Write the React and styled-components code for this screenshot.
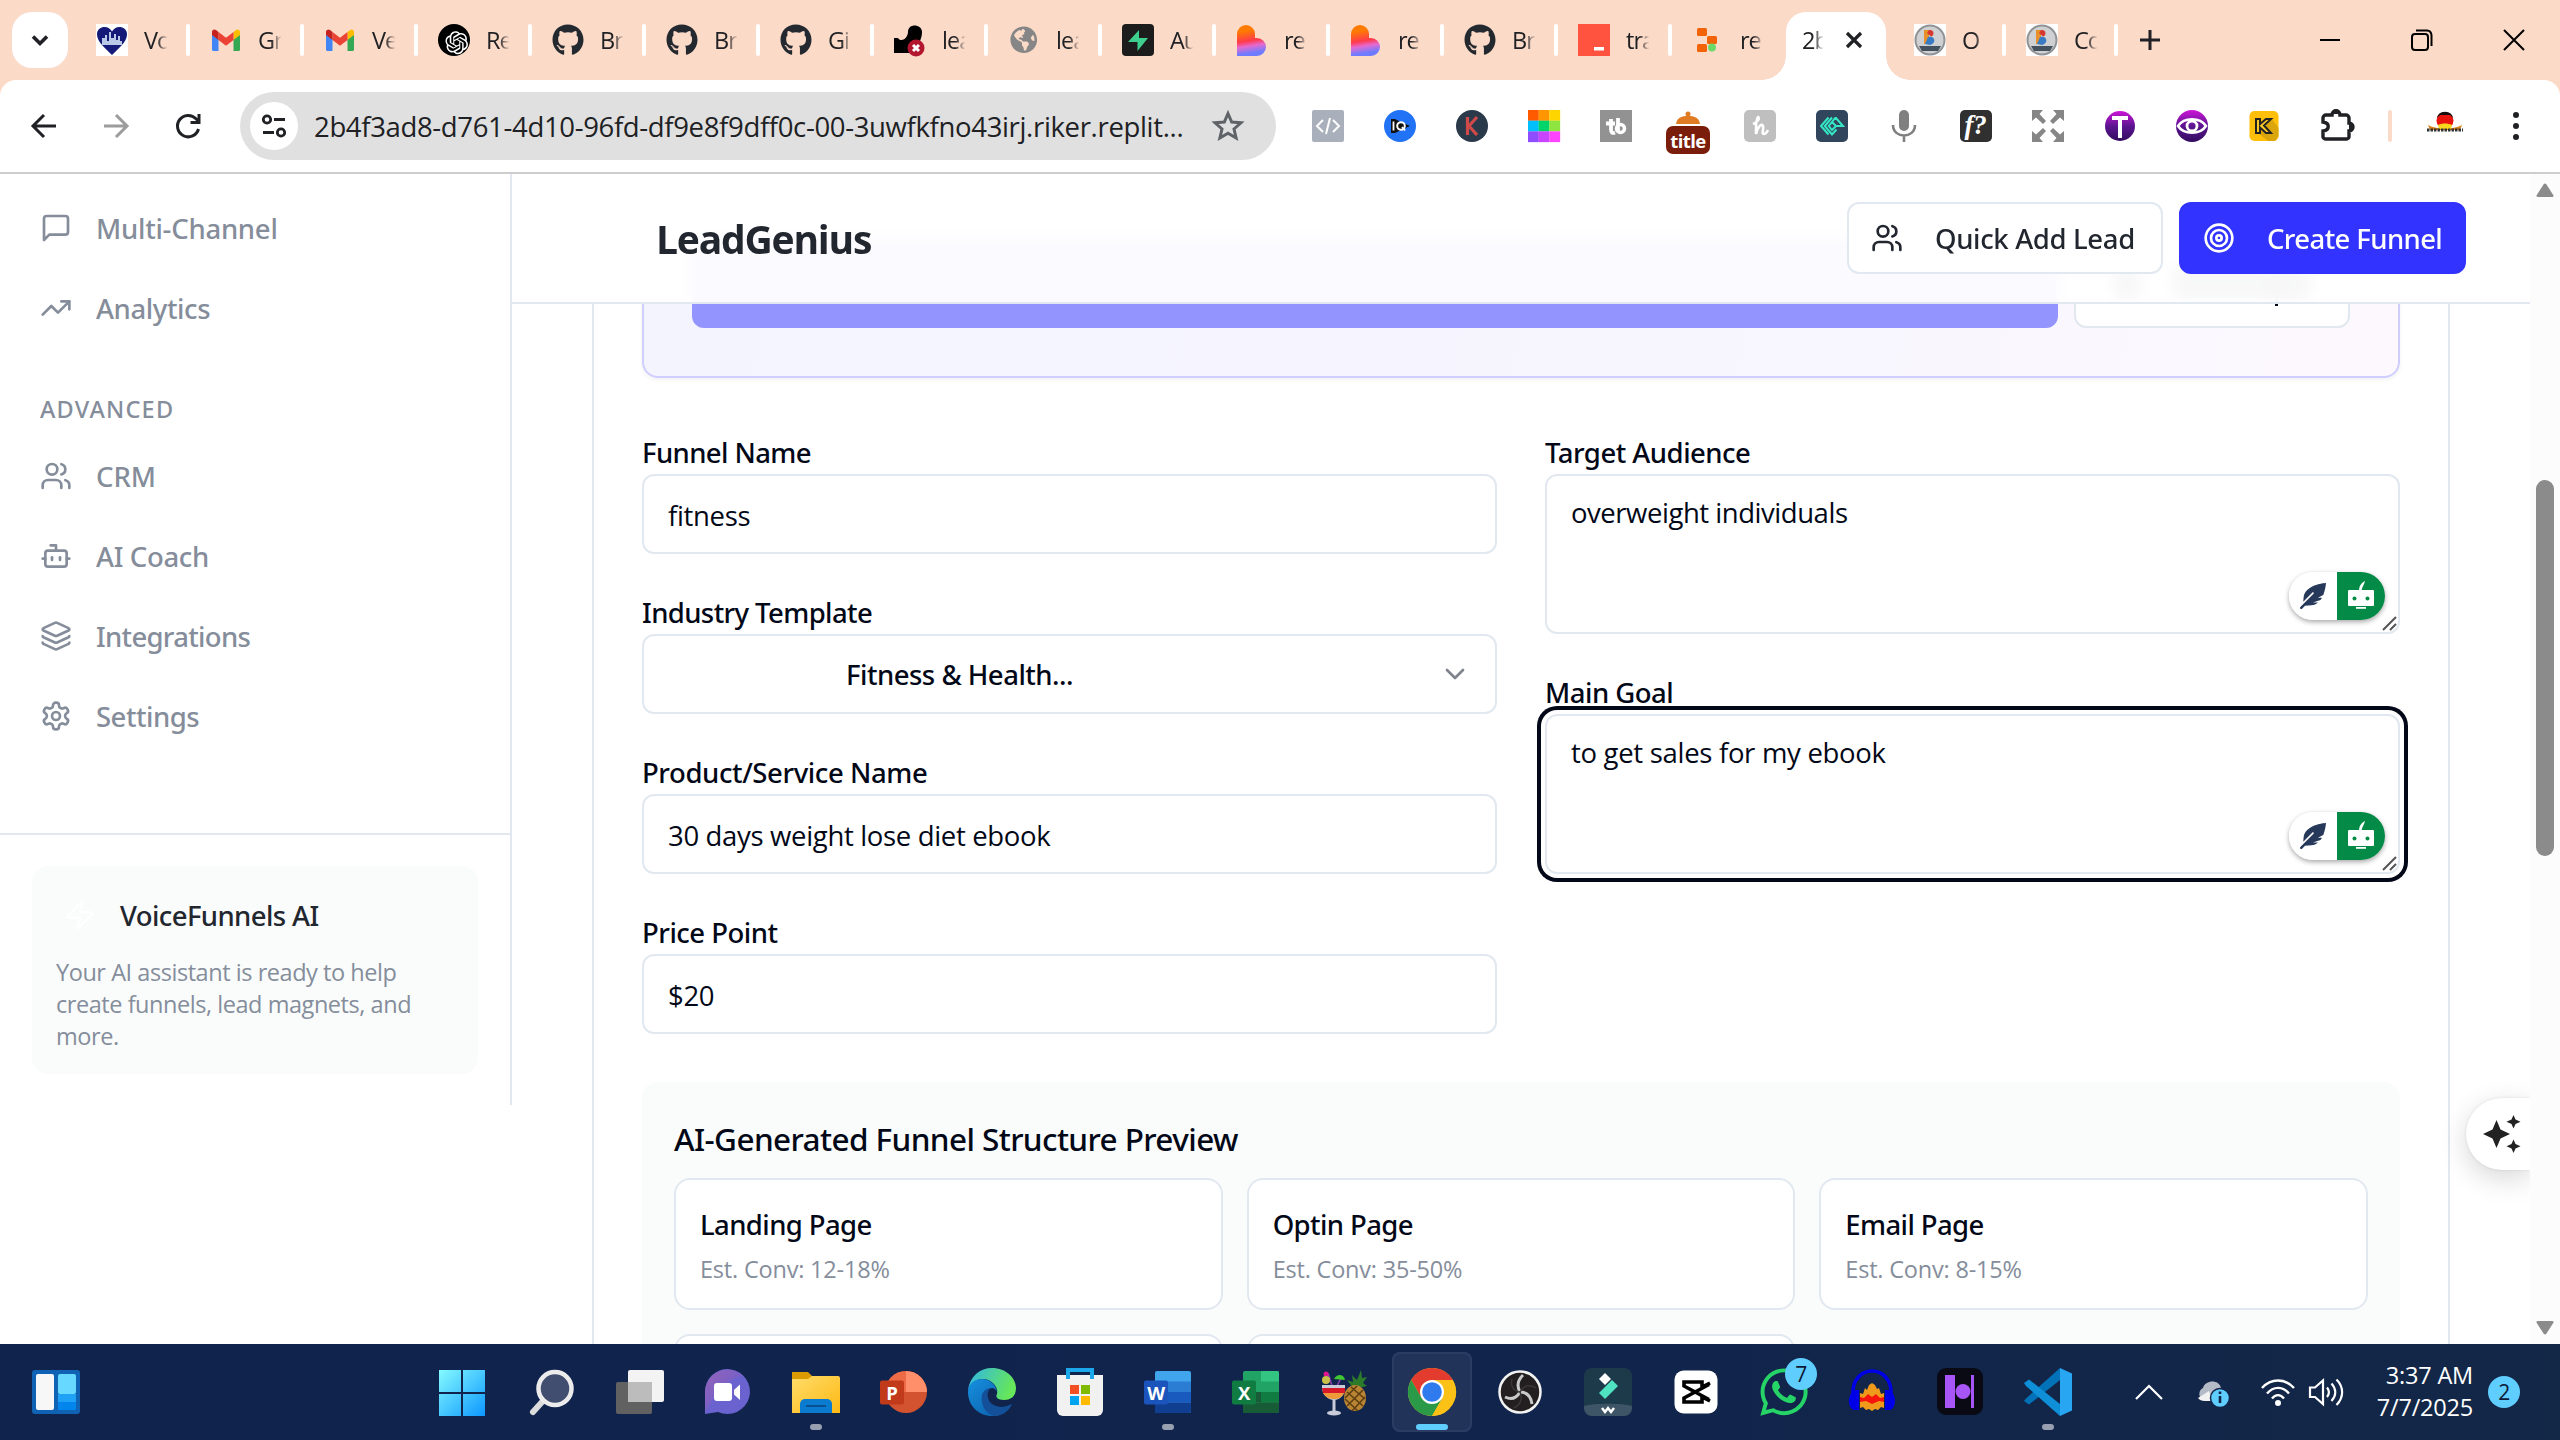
import React from 'react';
import styled, { createGlobalStyle, css } from 'styled-components';
import { Users, TrendingUp, Bot, Layers, Target, Zap, ChevronDown } from 'lucide-react';
import { FaGithub, FaWhatsapp, FaFeatherAlt, FaGlobeAmericas } from 'react-icons/fa';
import { RiOpenaiFill } from 'react-icons/ri';

const BORDER = '#e2e8f0';
const INK = '#020817';
const MUTED = '#858d9b';
const REGULAR = '"Open Sans", "Noto Sans", sans-serif';
const MEDIUM = '"Noto Sans", "Open Sans", sans-serif';

const Global = createGlobalStyle`
  *, *::before, *::after { box-sizing: border-box; }
  html, body { margin: 0; background: #fff; overflow: hidden; }
  svg { display: block; flex: none; overflow: visible; }
`;

const Screen = styled.div`
  width: 2560px;
  height: 1440px;
  display: flex;
  flex-direction: column;
  overflow: hidden;
  font-family: ${REGULAR};
  font-size: 27.5px;
  letter-spacing: -0.012em;
  color: ${INK};
`;

const medium = css`
  font-family: ${MEDIUM};
  font-weight: 500;
  letter-spacing: ${(p) => p.$track ?? -0.6}px;
`;

/* ---------- Browser tabs ---------- */

const TabStrip = styled.div`
  height: 80px;
  flex: none;
  display: flex;
  padding: 12px 0 0 12px;
  background: #fcdac8;
  color: #202124;
`;

const TabSearch = styled.div`
  width: 56px;
  height: 56px;
  margin-right: 8px;
  border-radius: 20px;
  background: #fff;
  display: grid;
  place-items: center;
`;

const Tab = styled.div`
  width: ${(p) => p.$w || 114}px;
  height: 56px;
  padding-left: 20px;
  display: flex;
  align-items: center;
  gap: 16px;
  ${(p) => p.$gap && `margin-left: ${p.$gap}px;`}
  &::after {
    content: '';
    width: 4px;
    height: 32px;
    margin-left: auto;
    border-radius: 2px;
    background: ${(p) => (p.$last ? 'transparent' : '#fff')};
  }
`;

const TabTitle = styled.span`
  width: ${(p) => p.$w || 24}px;
  overflow: hidden;
  white-space: nowrap;
  font-size: 23.5px;
  line-height: 32px;
  letter-spacing: -1px;
  mask-image: linear-gradient(90deg, #000 55%, transparent 98%);
`;

const ActiveTab = styled.div`
  position: relative;
  width: 100px;
  height: 68px;
  padding: 0 0 12px 16px;
  display: flex;
  align-items: center;
  gap: 21px;
  border-radius: 20px 20px 0 0;
  background: #fff;
  &::before, &::after {
    content: '';
    position: absolute;
    bottom: 0;
    width: 24px;
    height: 24px;
  }
  &::before { right: 100%; background: radial-gradient(circle at 0 0, transparent 23.5px, #fff 24px); }
  &::after { left: 100%; background: radial-gradient(circle at 100% 0, transparent 23.5px, #fff 24px); }
`;

const NewTab = styled.div`
  width: 64px;
  height: 56px;
  display: grid;
  place-items: center;
`;

const WindowButtons = styled.div`
  height: 56px;
  margin-left: auto;
  padding-right: 35px;
  display: flex;
  align-items: center;
  gap: 70px;
`;

/* ---------- Browser toolbar ---------- */

const ToolbarBack = styled.div`
  height: 94px;
  flex: none;
  background: #fcdac8;
`;

const Toolbar = styled.div`
  height: 94px;
  display: flex;
  align-items: center;
  padding: 0 28px 0 28px;
  background: #fff;
  border-bottom: 2px solid #cdcdcd;
  border-radius: 16px 16px 0 0;
`;

const IconRow = styled.div`
  display: flex;
  align-items: center;
  gap: 40px;
`;

const Omnibox = styled.div`
  width: 1036px;
  height: 68px;
  margin: 0 36px;
  padding: 0 30px 0 10px;
  display: flex;
  align-items: center;
  border-radius: 34px;
  background: #e0e0e0;
`;

const SiteInfo = styled.div`
  width: 48px;
  height: 48px;
  border-radius: 50%;
  background: #fff;
  display: grid;
  place-items: center;
`;

const Url = styled.span`
  flex: 1;
  padding-left: 16px;
  white-space: nowrap;
  letter-spacing: -0.34px;
  color: #202124;
`;

const ToolbarDivider = styled.div`
  width: 4px;
  height: 32px;
  margin: 0 34px 0 36px;
  border-radius: 2px;
  background: #fcdac8;
`;

const Dots = styled.div`
  margin-left: 49px;
  display: grid;
  gap: 5px;
  i { width: 6px; height: 6px; border-radius: 50%; background: #202124; }
`;

/* ---------- Page frame ---------- */

const Page = styled.div`
  flex: 1;
  min-height: 0;
  display: flex;
  background: #fff;
`;

const Sidebar = styled.aside`
  width: 512px;
  height: 931px;
  flex: none;
  display: flex;
  flex-direction: column;
  border-right: 2px solid ${BORDER};
`;

const Nav = styled.nav`
  height: 659px;
  padding-top: 14px;
`;

const NavItem = styled.div`
  height: 80px;
  padding-left: 40px;
  display: flex;
  align-items: center;
  gap: 24px;
  color: ${MUTED};
`;

const NavText = styled.span`
  ${medium}
  padding-top: 1px;
`;

const NavHeading = styled.div`
  ${medium}
  margin: 45px 0 11px;
  padding-left: 40px;
  line-height: 32px;
  font-size: 23.5px;
  color: ${MUTED};
`;

const SidebarFooter = styled.div`
  border-top: 2px solid ${BORDER};
  padding: 31px 32px;
`;

const AssistantCard = styled.div`
  height: 208px;
  padding: 25px 24px;
  border-radius: 16px;
  background: #fafcfb;
`;

const AssistantHead = styled.div`
  height: 48px;
  padding-left: 8px;
  display: flex;
  align-items: center;
  gap: 24px;
  color: #22262f;
  span { ${medium} }
`;

const AssistantText = styled.p`
  margin: 17px 0 0;
  font-size: 23.5px;
  line-height: 32px;
  letter-spacing: -0.45px;
  color: ${MUTED};
`;

const Main = styled.main`
  flex: 1;
  min-width: 0;
  display: grid;
  overflow: hidden;
`;

const Header = styled.header`
  grid-area: 1 / 1;
  z-index: 1;
  align-self: start;
  height: 130px;
  padding: 0 64px 0 144px;
  display: flex;
  align-items: center;
  gap: 16px;
  background: rgba(255, 255, 255, 0.95);
  backdrop-filter: blur(8px);
  border-bottom: 2px solid ${BORDER};
`;

const Brand = styled.h1`
  flex: 1;
  margin: 0;
  font-size: 39px;
  font-weight: 700;
  letter-spacing: -1.2px;
  color: #22262f;
`;

const HeaderButton = styled.div`
  ${medium}
  width: ${(p) => p.$w}px;
  height: 72px;
  padding: 0 0 0 22px;
  display: flex;
  align-items: center;
  gap: 32px;
  white-space: nowrap;
  border-radius: 12px;
  border: 2px solid ${(p) => (p.$primary ? '#3333ff' : BORDER)};
  background: ${(p) => (p.$primary ? '#3333ff' : '#fff')};
  color: ${(p) => (p.$primary ? '#fff' : '#22262f')};
`;

const Content = styled.div`
  grid-area: 1 / 1;
  min-height: 0;
  padding: 0 80px;
  overflow: hidden;
`;

const Card = styled.section`
  width: 1858px;
  height: 1300px;
  margin-top: -40px;
  padding: 18px 48px 0;
  border: 2px solid ${BORDER};
  border-radius: 16px;
`;

const VoicePanel = styled.div`
  height: 224px;
  padding: 0 48px 48px;
  display: flex;
  align-items: flex-end;
  gap: 16px;
  border: 2px solid #d0ceff;
  border-radius: 16px;
  background: linear-gradient(100deg, #f4f4ff, #f6f5fe 50%, #fcf8fe);
  box-shadow: 0 2px 4px rgba(0, 0, 0, 0.06);
`;

const GenerateButton = styled.div`
  flex: 1;
  height: 88px;
  border-radius: 12px;
  background: #9494ff;
`;

const OutlineButton = styled.div`
  width: 276px;
  height: 88px;
  padding-top: 24px;
  display: flex;
  justify-content: center;
  gap: 30px;
  border: 2px solid ${BORDER};
  border-radius: 12px;
  background: #fff;
`;

const Hint = styled.i`
  width: ${(p) => p.$w}px;
  height: 32px;
  border-radius: 8px;
  background: rgba(2, 8, 23, 0.6);
  ${(p) => p.$tail && `
    &::after {
      content: '';
      display: block;
      width: 3px;
      height: 40px;
      margin-left: 103px;
      background: ${INK};
    }
  `}
`;

const Form = styled.div`
  margin-top: 64px;
  display: grid;
  grid-template-columns: 1fr 1fr;
  gap: 48px;
`;

const Column = styled.div`
  display: flex;
  flex-direction: column;
  gap: 48px;
`;

const Label = styled.div`
  ${medium}
  height: 32px;
  line-height: 22px;
`;

const Input = styled.div`
  height: 80px;
  padding: ${(p) => (p.$select ? '0 24px 0 202px' : '2px 24px 0')};
  display: flex;
  align-items: center;
  justify-content: space-between;
  border: 2px solid ${BORDER};
  border-radius: 12px;
  background: #fff;
`;

const SelectValue = styled.span`
  ${medium}
`;

const TextArea = styled.div`
  height: 160px;
  padding: 17px 8px 7px 24px;
  display: flex;
  justify-content: space-between;
  line-height: 40px;
  letter-spacing: ${(p) => p.$track ?? -0.33}px;
  border: 2px solid ${BORDER};
  border-radius: 12px;
  background: #fff;
  ${(p) => p.$focus && `box-shadow: 0 0 0 4px #fff, 0 0 0 8px ${INK};`}
`;

const Corner = styled.div`
  align-self: flex-end;
  display: flex;
  align-items: flex-end;
  margin: 0 -8px -7px 0;
`;

const Pill = styled.div`
  width: 96px;
  height: 48px;
  margin: 0 -3px 12px 0;
  display: flex;
  border-radius: 24px;
  overflow: hidden;
  box-shadow: 0 2px 5px rgba(0, 0, 0, 0.35);
  background: linear-gradient(90deg, #fff 50%, #038a46 50%);
  > * { width: 48px; height: 48px; padding: 11px; }
`;

const Preview = styled.div`
  height: 400px;
  margin-top: 48px;
  padding: 32px;
  border-radius: 16px;
  background: #fafcfb;
`;

const PreviewTitle = styled.h2`
  ${medium}
  margin: 0 0 16px;
  font-size: 31.5px;
  line-height: 50px;
  height: 48px;
`;

const Stages = styled.div`
  display: grid;
  grid-template-columns: repeat(3, 1fr);
  gap: 24px;
`;

const Stage = styled.div`
  height: 132px;
  padding: 25px 24px 0;
  border: 2px solid ${BORDER};
  border-radius: 16px;
  background: #fff;
`;

const StageName = styled.div`
  ${medium}
  line-height: 40px;
`;

const StageRate = styled.div`
  margin-top: 8px;
  font-size: 23.5px;
  line-height: 32px;
  letter-spacing: -0.2px;
  color: ${MUTED};
`;

const ScrollRail = styled.div`
  width: 30px;
  flex: none;
  padding: 9px 6px 8px;
  background: #fcfcfc;
  display: flex;
  flex-direction: column;
`;

const Thumb = styled.div`
  height: 376px;
  margin: 279px 0 auto;
  border-radius: 9px;
  background: #8b8b8b;
`;

const Floater = styled.div`
  position: absolute;
  right: 30px;
  top: 1098px;
  width: 64px;
  height: 72px;
  padding-left: 16px;
  display: flex;
  align-items: center;
  border-radius: 36px 0 0 36px;
  background: #fff;
  clip-path: inset(-60px 0 -60px -60px);
  box-shadow: 0 8px 28px rgba(0, 0, 0, 0.16), 0 0 3px rgba(0, 0, 0, 0.1);
`;

/* ---------- Taskbar ---------- */

const Taskbar = styled.footer`
  height: 96px;
  flex: none;
  padding: 0 40px 0 32px;
  display: flex;
  align-items: center;
  background: linear-gradient(90deg, #10234d, #11244c 60%, #132747);
  color: #fff;
`;

const Apps = styled.div`
  margin-left: 344px;
  display: flex;
  gap: 8px;
`;

const TaskApp = styled.div`
  position: relative;
  width: 80px;
  height: 80px;
  display: grid;
  place-items: center;
  border-radius: 8px;
  ${(p) => p.$state === 'active' && 'background: #22335a; box-shadow: inset 0 0 0 2px #2c3c62;'}
  &::after {
    content: '';
    display: ${(p) => (p.$state ? 'block' : 'none')};
    position: absolute;
    bottom: 2px;
    left: 50%;
    transform: translateX(-50%);
    width: ${(p) => (p.$state === 'active' ? 32 : 12)}px;
    height: 6px;
    border-radius: 3px;
    background: ${(p) => (p.$state === 'active' ? '#60cdff' : '#979fb0')};
  }
`;

const Badge = styled.div`
  width: 32px;
  height: 32px;
  border-radius: 50%;
  display: grid;
  place-items: center;
  font-size: 21px;
  background: #60cdff;
  color: #0c1a35;
  ${(p) => p.$over && 'position: absolute; top: 6px; right: 7px;'}
`;

const Tray = styled.div`
  margin-left: auto;
  display: flex;
  align-items: center;
`;

const TrayGroup = styled.div`
  margin-left: ${(p) => p.$gap}px;
`;

const Clock = styled.div`
  width: 116px;
  margin: -2px 15px 0 14px;
  text-align: right;
  font-size: 23.5px;
  line-height: 32px;
  letter-spacing: -0.2px;
  white-space: nowrap;
`;

/* ---------- Drawings ---------- */

const Svg = ({ s = 32, box = s, children, ...rest }) => (
  <svg width={s} height={s} viewBox={`0 0 ${box} ${box}`} fill="none" {...rest}>{children}</svg>
);

const Line = (props) => <path stroke="#202124" strokeWidth="3" fill="none" {...props} />;

const HeartCity = () => (
  <Svg>
    <rect width="32" height="32" fill="#fff" />
    <path d="M16 31C10 25 1 18 1 10.500C1 5 5 3 8.500 3C12 3 14.500 5 16 7.500C17.500 5 20 3 23.500 3C27 3 31 5 31 10.500C31 18 22 25 16 31Z" fill="#151a78" />
    <path d="M6 21V14H9V11H11V17H13V8H15V14H18V10H20V16H22V12H24V17H26V21Z" fill="#b9c8e6" />
  </Svg>
);

const Gmail = () => (
  <Svg>
    <path d="M2 8V25.500A1.500 1.500 0 0 0 3.500 27H8.500V15Z" fill="#4285f4" />
    <path d="M30 8V25.500A1.500 1.500 0 0 1 28.500 27H23.500V15Z" fill="#34a853" />
    <path d="M23.500 8L26 6C28 4.500 30 6 30 8V11L23.500 16Z" fill="#fbbc04" />
    <path d="M8.500 8L16 13.700L23.500 8V16L16 21.700L8.500 16Z" fill="#ea4335" />
    <path d="M2 8C2 6 4 4.500 6 6L8.500 8V16L2 11Z" fill="#c5221f" />
  </Svg>
);

const OpenAI = () => (
  <Svg>
    <circle cx="16" cy="16" r="16" fill="#000" />
    <RiOpenaiFill x="5" y="5" width="22" height="22" color="#fff" />
  </Svg>
);

const GitHub = () => <FaGithub size={32} color="#24292f" />;

const BlockedSite = () => (
  <Svg>
    <path d="M14 8C14 -1 28 0 28 8C28 12 27 14 26 17V29H0V14H4C7 19 14 14 14 8Z" fill="#000" />
    <circle cx="22" cy="24" r="8.500" fill="#b3172f" />
    <path d="M19 21L25 27M25 21L19 27" stroke="#fff" strokeWidth="3" />
  </Svg>
);

const GlobeIcon = () => (
  <Svg><FaGlobeAmericas x="2" y="2" width="28" height="28" color="#868686" /></Svg>
);

const Supabase = () => (
  <Svg>
    <rect width="32" height="32" rx="4" fill="#1c1c1c" />
    <path d="M17 6V14H26L15.500 27V18H6Z" fill="#3ecf8e" />
  </Svg>
);

const Lovable = ({ id }) => (
  <Svg>
    <defs>
      <linearGradient id={id} x1="12" y1="0" x2="17" y2="32" gradientUnits="userSpaceOnUse">
        <stop offset="0.200" stopColor="#ff7a00" /><stop offset="0.520" stopColor="#ff3b4e" />
        <stop offset="0.680" stopColor="#e56ad0" /><stop offset="0.900" stopColor="#6f7bff" />
      </linearGradient>
    </defs>
    <path d="M1 10A9 9 0 0 1 19 10V14H21A9 9 0 0 1 21 32H1Z" fill={`url(#${id})`} />
  </Svg>
);

const RedTile = () => (
  <Svg>
    <rect width="32" height="32" fill="#ff5340" />
    <rect x="16" y="23" width="10" height="3.500" fill="#fff" />
  </Svg>
);

const Replit = () => (
  <Svg>
    <rect x="5" y="4" width="10" height="8" rx="1.500" fill="#f26207" />
    <rect x="15" y="12" width="10" height="8" rx="1.500" fill="#f26207" />
    <rect x="5" y="20" width="10" height="8" rx="1.500" fill="#f26207" />
    <circle cx="20" cy="23.500" r="4" fill="#6bd968" />
  </Svg>
);

const BadgeB = () => (
  <Svg>
    <rect width="32" height="32" fill="#fff" />
    <circle cx="16" cy="16" r="14.500" fill="#cfd0d1" stroke="#8f9396" strokeWidth="2" />
    <path d="M10 6H15V20H10Z" fill="#e8912c" />
    <path d="M15 6C20 5 21 11 17 12.500L13 9Z" fill="#d4382f" />
    <path d="M14 13C21 11 23 19 16 21L11 20Z" fill="#3a7cc4" />
    <path d="M5 22H27L24 27H8Z" fill="#44515e" />
  </Svg>
);

const TABS = [
  [HeartCity, 'Vo'], [Gmail, 'Gr'], [Gmail, 'Ve'], [OpenAI, 'Re'], [GitHub, 'Br'],
  [GitHub, 'Br'], [GitHub, 'Gi'], [BlockedSite, 'lea'], [GlobeIcon, 'lea'], [Supabase, 'Au'],
  [Lovable, 're'], [Lovable, 're'], [GitHub, 'Br'], [RedTile, 'tra'], [Replit, 're'],
];

const GRID_COLORS = ['#ff5a00', '#ff9500', '#ffd500', '#00bfff', '#00d46a', '#8ee53f', '#8f4dff', '#c944ff', '#ff44ff'];

const Extensions = () => (
  <IconRow>
    <Svg>
      <rect width="32" height="32" rx="2" fill="#a9afbb" />
      <path d="M11 10L5 16L11 22M21 10L27 16L21 22M18 8L14 24" stroke="#fff" strokeWidth="2" />
    </Svg>
    <Svg>
      <circle cx="16" cy="16" r="16" fill="#2172f5" />
      <path d="M7 9H11L17 12L26 16L17 20L11 23H7Z" fill="#111" />
      <path d="M9.500 11.500V20.500" stroke="#fff" strokeWidth="1.800" />
      <circle cx="17" cy="16" r="3.800" fill="#111" stroke="#fff" strokeWidth="2" />
      <path d="M18 17L21 20.500" stroke="#fff" strokeWidth="1.800" />
    </Svg>
    <Svg>
      <circle cx="16" cy="16" r="16" fill="#2a3a4b" />
      <path d="M11.500 7V25M21 7L13 16L21 25" stroke="#cf4a48" strokeWidth="3.200" />
    </Svg>
    <Svg>
      {GRID_COLORS.map((c, i) => (
        <rect key={c} x={(i % 3) * 10.67} y={Math.floor(i / 3) * 10.67} width="10.8" height="10.8" fill={c} />
      ))}
    </Svg>
    <Svg>
      <rect width="32" height="32" fill="#929292" />
      <path d="M11 9V19.500C11 23 12.500 23.500 15 22.500M6 13.500H15M18 8V22" stroke="#fff" strokeWidth="3.800" />
      <circle cx="20.500" cy="18.500" r="4" stroke="#fff" strokeWidth="3.500" />
    </Svg>
    <Svg>
      <circle cx="16" cy="4" r="2.500" fill="#df7c24" />
      <path d="M4 14C5 7 10 6 16 6S27 7 28 14Z" fill="#df7c24" />
      <rect x="-6" y="16" width="44" height="28" rx="7" fill="#7a1e0b" />
      <text x="16" y="37.500" textAnchor="middle" fontFamily="Open Sans, sans-serif" fontWeight="700" fontSize="18.500" letterSpacing="-0.600" fill="#fff">title</text>
    </Svg>
    <Svg>
      <rect width="32" height="32" rx="5" fill="#bfbfbf" />
      <path d="M9 14C14 12 16 8 14 7C12 7 12 18 12 24C14 16 18 13 19 16C20 19 17 24 20 24C22 24 23 22 24 20" stroke="#fff" strokeWidth="2.600" />
    </Svg>
    <Svg>
      <rect width="32" height="32" rx="5" fill="#31455c" />
      <path d="M12.500 7.500L5 16L12.500 24.500M16 7.500L8.800 16L16 24.500L20.500 19.500M19.500 7.500L27 16H20L16 20L12.800 16L19.500 7.500M16 12L20 16" stroke="#35e8c5" strokeWidth="2" />
    </Svg>
    <Svg>
      <rect x="11" y="0" width="10" height="21" rx="5" fill="#808080" />
      <path d="M5 15C5 29 27 29 27 15M16 26V32" stroke="#808080" strokeWidth="2.600" />
    </Svg>
    <Svg>
      <rect width="32" height="32" rx="5" fill="#303030" />
      <text x="15.500" y="24" textAnchor="middle" fontFamily="Liberation Serif, serif" fontStyle="italic" fontWeight="700" fontSize="27" fill="#fff">f?</text>
    </Svg>
    <Svg>
      <path d="M0 0H11L7.500 4L14 11L11 14L4 7.500L0 11ZM32 0V11L28 7.500L21 14L18 11L24.500 4L21 0ZM0 32V21L4 24.500L11 18L14 21L7.500 28L11 32ZM32 32H21L24.500 28L18 21L21 18L28 24.500L32 21Z" fill="#868686" />
    </Svg>
    <Svg>
      <defs><linearGradient id="purpleT" x2="0" y2="1"><stop stopColor="#ce14d8" /><stop offset="0.500" stopColor="#5c1591" /><stop offset="1" stopColor="#320b5f" /></linearGradient></defs>
      <circle cx="16" cy="16" r="15" fill="url(#purpleT)" />
      <path d="M8 8H24M16 8V28" stroke="#fff" strokeWidth="4" />
    </Svg>
    <Svg>
      <circle cx="16" cy="16" r="16" fill="url(#purpleT)" />
      <path d="M2 16C8 7 24 7 30 16C24 25 8 25 2 16Z" stroke="#fff" strokeWidth="2.600" />
      <circle cx="16" cy="16" r="5" stroke="#fff" strokeWidth="2.800" />
    </Svg>
    <Svg>
      <rect x="1.500" y="1" width="29" height="30" rx="5" fill="#ffbe0a" />
      <path d="M9 22L20 31H27L30.500 26V18L24 9Z" fill="#dba60c" />
      <path d="M8 9H12V14L18 9H23L16 15.500L23 23H18L12 17.500V23H8Z" fill="#ffc928" stroke="#222" strokeWidth="2" />
    </Svg>
    <Svg>
      <path d="M12 5A4 4 0 0 1 20 5H26A3 3 0 0 1 29 8V13A4 4 0 0 1 29 21V27A3 3 0 0 1 26 29H6A3 3 0 0 1 3 27V21C10 20 10 13 3 12V8A3 3 0 0 1 6 5Z" stroke="#202124" strokeWidth="3.400" />
      <path d="M11 4A5 5 0 0 1 21 4ZM29 12A5 5 0 0 1 29 22Z" fill="#202124" />
    </Svg>
  </IconRow>
);

const Avatar = () => (
  <svg width="38" height="32" viewBox="0 0 38 32">
    <path d="M2 15C12 20 26 20 36 15L34 20H4Z" fill="#d9821c" />
    <circle cx="19" cy="10.500" r="8.500" fill="#e8130c" />
    <path d="M10.800 8A8.500 8.500 0 0 1 27.200 8L24 5H14Z" fill="#111" />
    <path d="M12 15C16 13 22 13 26 15L25 19H13Z" fill="#f8d81c" />
    <path d="M1 20H37" stroke="#333" strokeWidth="3" strokeDasharray="2.500 1" />
  </svg>
);

const RobotFace = () => (
  <svg viewBox="0 0 26 26" fill="#fff">
    <path d="M11 8C11 3 13 0 17 -2C16 2 14 4 13.500 8Z" />
    <rect x="0" y="7" width="26" height="16" rx="1" />
    <rect x="8" y="24" width="10" height="1.800" />
    <circle cx="6.500" cy="15.500" r="2" fill="#038a46" />
    <circle cx="19.500" cy="15.500" r="2" fill="#038a46" />
  </svg>
);

const COG = 'M12.22 2h-.44a2 2 0 0 0-2 2v.18a2 2 0 0 1-1 1.73l-.43.25a2 2 0 0 1-2 0l-.15-.08a2 2 0 0 0-2.73.73l-.22.38a2 2 0 0 0 .73 2.73l.15.1a2 2 0 0 1 1 1.72v.51a2 2 0 0 1-1 1.74l-.15.09a2 2 0 0 0-.73 2.73l.22.38a2 2 0 0 0 2.73.73l.15-.08a2 2 0 0 1 2 0l.43.25a2 2 0 0 1 1 1.73V20a2 2 0 0 0 2 2h.44a2 2 0 0 0 2-2v-.18a2 2 0 0 1 1-1.73l.43-.25a2 2 0 0 1 2 0l.15.08a2 2 0 0 0 2.73-.73l.22-.39a2 2 0 0 0-.73-2.73l-.15-.08a2 2 0 0 1-1-1.74v-.5a2 2 0 0 1 1-1.74l.15-.09a2 2 0 0 0 .73-2.73l-.22-.38a2 2 0 0 0-2.73-.73l-.15.08a2 2 0 0 1-2 0l-.43-.25a2 2 0 0 1-1-1.73V4a2 2 0 0 0-2-2z';

const Outline = ({ children }) => (
  <Svg box={24} stroke="currentColor" strokeWidth="2" strokeLinecap="round" strokeLinejoin="round">{children}</Svg>
);
const MessageIcon = () => <Outline><path d="M21 15a2 2 0 0 1-2 2H7l-4 4V5a2 2 0 0 1 2-2h14a2 2 0 0 1 2 2z" /></Outline>;
const CogIcon = () => <Outline><path d={COG} /><circle cx="12" cy="12" r="3" /></Outline>;

const Grad = ({ id, a, b, x2 = 1, y2 = 1 }) => (
  <linearGradient id={id} x2={x2} y2={y2}><stop stopColor={a} /><stop offset="1" stopColor={b} /></linearGradient>
);

const Office = ({ letter, dark, children }) => (
  <Svg s={48}>
    {children}
    <rect x="0" y="12.500" width="24" height="24" rx="2" fill={dark} />
    <text x="12" y="31.500" textAnchor="middle" fontFamily="Open Sans, sans-serif" fontWeight="700" fontSize="18.500" fill="#fff">{letter}</text>
  </Svg>
);

const Widgets = () => (
  <Svg s={48}>
    <rect y="2" width="48" height="44" rx="3" fill="#1063b4" />
    <rect x="4" y="6" width="18" height="36" rx="2" fill="#f7f7f7" />
    <rect x="26" y="6" width="18" height="20" rx="2" fill="#67d8ff" />
    <rect x="26" y="26" width="18" height="8" fill="#1fa2f5" />
    <rect x="26" y="34" width="18" height="8" rx="1" fill="#0385ee" />
  </Svg>
);

const APPS = [
  { key: 'start', icon: (
    <Svg s={48}>
      <defs><linearGradient id="win" x1="0" y1="0" x2="48" y2="48" gradientUnits="userSpaceOnUse"><stop stopColor="#86fbff" /><stop offset="1" stopColor="#0894ff" /></linearGradient></defs>
      <path d="M-1 2H21V24H-1ZM23 2H45V24H23ZM-1 26H21V48H-1ZM23 26H45V48H23Z" fill="url(#win)" />
    </Svg>) },
  { key: 'search', icon: (
    <Svg s={48}>
      <path d="M14 34L5 44" stroke="#dcdcdc" strokeWidth="6" strokeLinecap="round" />
      <circle cx="27" cy="20.500" r="16.500" fill="#414e70" stroke="#ececec" strokeWidth="4.500" />
    </Svg>) },
  { key: 'tasks', icon: (
    <Svg s={48}>
      <rect x="0" y="14" width="36" height="32" rx="2" fill="#616161" />
      <rect x="12" y="2" width="36" height="32" rx="2" fill="#f3f3f3" />
      <rect x="12" y="14" width="24" height="20" fill="#bcbcbc" />
    </Svg>) },
  { key: 'chat', icon: (
    <Svg s={48}>
      <defs><Grad id="chat" a="#b562a8" b="#4f5bd8" /></defs>
      <path d="M1 46V25A22.500 22.500 0 1 1 14 44Z" fill="#6a63cf" />
      <path d="M1 46V25A22.500 22.500 0 0 1 40 9C30 4 6 30 1 46Z" fill="url(#chat)" opacity="0.600" />
      <rect x="10" y="15" width="18" height="18" rx="3" fill="#fff" />
      <path d="M30 22L36 16.500V32L30 26.500Z" fill="#fff" />
    </Svg>) },
  { key: 'files', state: 'open', icon: (
    <Svg s={48}>
      <defs><Grad id="folder" a="#ffdc6b" b="#fdb913" /></defs>
      <path d="M0 4H16L20 8V14H0Z" fill="#dc9a03" />
      <path d="M0 11H16L20 8H46A2 2 0 0 1 48 10V45H0Z" fill="url(#folder)" />
      <path d="M8 45V36A5 5 0 0 1 13 31H35A5 5 0 0 1 40 36V45Z" fill="#0b7bd0" />
      <path d="M14 38H34" stroke="#0a5194" strokeWidth="2" />
    </Svg>) },
  { key: 'ppt', icon: (
    <Office letter="P" dark="#c13b1b">
      <circle cx="26" cy="24" r="21" fill="#d35230" />
      <path d="M5 24A21 21 0 0 1 26 3V24Z" fill="#ed6c47" />
      <path d="M26 3A21 21 0 0 1 47 24H26Z" fill="#ff8f6b" />
    </Office>) },
  { key: 'edge', icon: (
    <Svg s={48}>
      <defs><Grad id="edgeA" a="#2fb6e9" b="#66e65a" y2={0.3} /><Grad id="edgeB" a="#1590df" b="#0c59a4" /></defs>
      <path d="M0 22C2 8 12 0 24 0C38 0 48 10 48 20C48 29 42 32 36 32C30 32 27 29 29 26C31 20 24 11 15 11C8 11 3 15 0 22Z" fill="url(#edgeA)" />
      <path d="M0 24C0 15 7 11 14 11C22 11 28 17 29 24C27 19 23 19 20 22C14 29 22 40 34 39C39 39 42 37 44 36C40 44 33 48 24 48C11 48 0 38 0 24Z" fill="url(#edgeB)" />
      <path d="M14 27C12 36 18 47 27 48C34 48 41 43 44 36C34 42 22 38 20 30C19 26 20 23 22 20C17 21 15 24 14 27Z" fill="#14509a" />
    </Svg>) },
  { key: 'store', icon: (
    <Svg s={48}>
      <path d="M1 7H47V42A6 6 0 0 1 41 48H7A6 6 0 0 1 1 42Z" fill="#f1f1f1" />
      <path d="M12 11V2H36V11" stroke="#1ba8ea" strokeWidth="4" />
      <path d="M14 17H23V26H14Z" fill="#f25022" /><path d="M25 17H34V26H25Z" fill="#7fba00" />
      <path d="M14 28H23V37H14Z" fill="#00a4ef" /><path d="M25 28H34V37H25Z" fill="#ffb900" />
    </Svg>) },
  { key: 'word', state: 'open', icon: (
    <Office letter="W" dark="#1b55bb">
      <rect x="11" y="3" width="36" height="42" rx="2" fill="#41a5ee" />
      <path d="M11 13.500H47V24H11Z" fill="#2b7cd3" /><path d="M11 24H47V34.500H11Z" fill="#185abd" />
      <path d="M11 34.500H47V43A2 2 0 0 1 45 45H11Z" fill="#103f91" />
    </Office>) },
  { key: 'excel', icon: (
    <Office letter="X" dark="#107c41">
      <rect x="11" y="3" width="36" height="42" rx="2" fill="#21a366" />
      <path d="M29 3H45A2 2 0 0 1 47 5V13.500H29Z" fill="#33c481" />
      <path d="M11 24H29V34.500H11Z" fill="#185c37" /><path d="M29 24H47V34.500H29Z" fill="#107c41" />
      <path d="M11 34.500H47V43A2 2 0 0 1 45 45H11Z" fill="#185c37" />
    </Office>) },
  { key: 'cocktail', icon: (
    <Svg s={48}>
      <path d="M33 20L27 12L33 14L32 7L37 12L41 2L42 10L47 9L43 15L47 18L38 20Z" fill="#2c7a2b" />
      <ellipse cx="35" cy="30" rx="11" ry="13" fill="#b98433" />
      <path d="M27 24L43 38M25 31L38 43M31 19L45 31M43 22L27 38M45 29L32 43M37 18L25 30" stroke="#5e3f12" strokeWidth="1.600" />
      <path d="M8 5L12 18M17 18L22 8" stroke="#8a3fae" strokeWidth="1.600" />
      <circle cx="6" cy="6" r="2.500" fill="#e0148f" /><path d="M14 11C17 5 24 6 25 12Z" fill="#3fc630" />
      <circle cx="6" cy="12" r="4" fill="#c9c04a" />
      <path d="M2 17H25C26 26 20 32 14 32S1 26 2 17Z" fill="#c9ccd8" />
      <path d="M2 20H25V25H3Z" fill="#d8192a" /><path d="M3 25H24C22 30 18 31 14 31S6 30 3 25Z" fill="#ee9a3a" />
      <path d="M14 32V44" stroke="#c9ccd8" strokeWidth="3" /><ellipse cx="14" cy="45" rx="7" ry="2.500" fill="#c9ccd8" />
    </Svg>) },
  { key: 'chrome', state: 'active', icon: (
    <Svg s={48}>
      <circle cx="24" cy="24" r="24" fill="#fbc116" />
      <path d="M24 12H44.800A24 24 0 0 0 3.200 12L13.600 30Z" fill="#e33b2e" />
      <path d="M3.200 12A24 24 0 0 0 24 48L34.400 30H24L13.600 30Z" fill="#2a9a49" />
      <path d="M24 12H44.800A24 24 0 0 1 24 48L34.400 30Z" fill="#fbc116" />
      <circle cx="24" cy="24" r="12" fill="#fff" /><circle cx="24" cy="24" r="9.800" fill="#2f7bee" />
    </Svg>) },
  { key: 'obs', icon: (
    <Svg s={48}>
      <circle cx="24" cy="24" r="20.500" fill="#231f20" stroke="#f2f2f2" strokeWidth="2.500" />
      <path d="M24 24C20 17 22 12 27 7M24 24C32 24 35 29 36 36M24 24C20 31 15 32 9 29" stroke="#c9c9c9" strokeWidth="3" />
      <path d="M24 24C17 23 14 17 16 11M24 24C28 17 34 16 40 20M24 24C27 31 24 37 18 40" stroke="#3a3738" strokeWidth="1.500" />
    </Svg>) },
  { key: 'filmora', icon: (
    <Svg s={48}>
      <rect width="48" height="48" rx="8" fill="#1d3a4b" />
      <path d="M0 38C10 35 38 35 48 38V40A8 8 0 0 1 40 48H8A8 8 0 0 1 0 40Z" fill="#3d5566" />
      <path d="M21 5L27 11L21 17L15 11Z" fill="#fff" /><path d="M28 12L34 18L21 31L15 25Z" fill="#50e3c2" />
      <path d="M18 40L21 44L24 40L27 44L30 40" stroke="#fff" strokeWidth="2.500" />
    </Svg>) },
  { key: 'capcut', icon: (
    <Svg s={48}>
      <rect x="2.500" y="2.500" width="43" height="43" rx="9" fill="#fff" />
      <path d="M38 15L30 19V14H12V18L37 31.500M38 33L30 29V34H12V30L37 16.500" stroke="#000" strokeWidth="3.600" />
    </Svg>) },
  { key: 'whatsapp', badge: '7', icon: <FaWhatsapp size={54} color="#25d366" /> },
  { key: 'audacity', icon: (
    <Svg s={48}>
      <path d="M5 27C3 -5 45 -5 43 27" stroke="#0000e8" strokeWidth="3.500" />
      <path d="M8 22C-1 24 -1 40 6 42H11V22ZM40 22C49 24 49 40 42 42H37V22Z" fill="#0000e8" />
      <path d="M12 40V25L15 26L17 20L19 22L21 17L24 15L27 17L29 21L31 20L33 26L36 25V40L33 39L30 42L27 41L24 43L21 41L18 42L15 39Z" fill="#f09a1c" />
      <path d="M12 34V29L16 30L20 26L24 29L28 26L32 30L36 29V34L31 33L24 36L18 33Z" fill="#f6150c" />
    </Svg>) },
  { key: 'studio', icon: (
    <Svg s={48}>
      <rect x="1" y="0" width="46" height="47" rx="9" fill="#0a0a14" />
      <path d="M9 7H19V40H9ZM35 7H38V40H35Z" fill="#a855f7" /><circle cx="27" cy="23.500" r="7.500" fill="#a855f7" />
    </Svg>) },
  { key: 'code', state: 'open', icon: (
    <Svg s={48}>
      <path d="M0 33L5 36.500L36 12V0L2 30.500Z" fill="#0272b8" />
      <path d="M0 15L5 11.500L36 36V48L2 18Z" fill="#0e8fd8" />
      <path d="M36 0L48 5.500V42.500L36 48Z" fill="#28a6f1" />
    </Svg>) },
];

/* ---------- Screen ---------- */

const Area = ({ label, text, focus, track }) => (
  <div>
    <Label $track={-0.5}>{label}</Label>
    <TextArea $focus={focus} $track={track}>
      <span>{text}</span>
      <Corner>
        <Pill><FaFeatherAlt color="#26395a" /><RobotFace /></Pill>
        <Svg s={16} stroke="#555" strokeWidth="2"><path d="M1 14L14 1M8 14L14 8" /></Svg>
      </Corner>
    </TextArea>
  </div>
);

export default function App() {
  return (
    <Screen>
      <Global />
      <TabStrip>
        <TabSearch><Svg s={16}><Line d="M1 4.500L8 11.500L15 4.500" strokeWidth="3.600" /></Svg></TabSearch>
        {TABS.map(([Icon, title], i) => (
          <Tab key={i} $last={i === TABS.length - 1}><Icon id={`fav${i}`} /><TabTitle>{title}</TabTitle></Tab>
        ))}
        <ActiveTab>
          <TabTitle $w={22}>2b</TabTitle>
          <Svg s={18}><Line d="M2 2L16 16M16 2L2 16" strokeWidth="3.200" /></Svg>
        </ActiveTab>
        <Tab $w={112} $gap={8}><BadgeB /><TabTitle>O</TabTitle></Tab>
        <Tab $w={112}><BadgeB /><TabTitle>Co</TabTitle></Tab>
        <NewTab><Svg s={20}><Line d="M10 0V20M0 10H20" /></Svg></NewTab>
        <WindowButtons>
          <Svg s={22}><Line stroke="#000" strokeWidth="2" d="M1 11H21" /></Svg>
          <Svg s={22}><rect x="1" y="5" width="16" height="16" rx="3" stroke="#000" strokeWidth="2" /><Line stroke="#000" strokeWidth="2" d="M5 1.500H16A5 5 0 0 1 20.500 6V17" /></Svg>
          <Svg s={22}><Line stroke="#000" strokeWidth="2" d="M1 1L21 21M21 1L1 21" /></Svg>
        </WindowButtons>
      </TabStrip>

      <ToolbarBack>
        <Toolbar>
          <IconRow>
            <Svg><Line d="M28 16H5M16 5L5 16L16 27" /></Svg>
            <Svg><Line stroke="#9c9c9c" d="M4 16H27M16 5L27 16L16 27" /></Svg>
            <Svg><Line d="M26.500 19A10.700 10.700 0 1 1 24 8.800L27 11.800M27 4V12.500H18.500" /></Svg>
          </IconRow>
          <Omnibox>
            <SiteInfo>
              <Svg s={24}><circle cx="5" cy="5.500" r="3.700" stroke="#202124" strokeWidth="2.800" /><circle cx="19" cy="18.500" r="3.700" stroke="#202124" strokeWidth="2.800" /><Line d="M12 5.500H23M1 18.500H12" strokeWidth="2.800" /></Svg>
            </SiteInfo>
            <Url>2b4f3ad8-d761-4d10-96fd-df9e8f9dff0c-00-3uwfkfno43irj.riker.replit...</Url>
            <Svg s={36}><path d="M18 5.500L21.700 14L31 14.800L24 21L26.100 30L18 25.200L9.900 30L12 21L5 14.800L14.300 14Z" stroke="#5f6368" strokeWidth="3" /></Svg>
          </Omnibox>
          <Extensions />
          <ToolbarDivider />
          <Avatar />
          <Dots><i /><i /><i /></Dots>
        </Toolbar>
      </ToolbarBack>

      <Page>
        <Sidebar>
          <Nav>
            <NavItem><MessageIcon /><NavText $track={-0.25}>Multi-Channel</NavText></NavItem>
            <NavItem><TrendingUp size={32} /><NavText $track={-0.4}>Analytics</NavText></NavItem>
            <NavHeading $track={1.2}>ADVANCED</NavHeading>
            <NavItem><Users size={32} /><NavText $track={0}>CRM</NavText></NavItem>
            <NavItem><Bot size={32} /><NavText $track={-0.35}>AI Coach</NavText></NavItem>
            <NavItem><Layers size={32} /><NavText $track={-0.7}>Integrations</NavText></NavItem>
            <NavItem><CogIcon /><NavText $track={-0.5}>Settings</NavText></NavItem>
          </Nav>
          <SidebarFooter>
            <AssistantCard>
              <AssistantHead><Zap size={32} color="#fff" strokeWidth={1.5} /><span>VoiceFunnels AI</span></AssistantHead>
              <AssistantText>Your AI assistant is ready to help<br />create funnels, lead magnets, and<br />more.</AssistantText>
            </AssistantCard>
          </SidebarFooter>
        </Sidebar>

        <Main>
          <Header>
            <Brand>LeadGenius</Brand>
            <HeaderButton $w={316} $track={-0.35}><Users size={32} />Quick Add Lead</HeaderButton>
            <HeaderButton $w={287} $primary><Target size={32} />Create Funnel</HeaderButton>
          </Header>
          <Content>
            <Card>
              <VoicePanel>
                <GenerateButton />
                <OutlineButton><Hint $w={30} /><Hint $w={140} $tail /></OutlineButton>
              </VoicePanel>
              <Form>
                <Column>
                  <div><Label>Funnel Name</Label><Input><span>fitness</span></Input></div>
                  <div><Label>Industry Template</Label><Input $select><SelectValue $track={-0.5}>Fitness &amp; Health...</SelectValue><ChevronDown size={32} color="#80848c" /></Input></div>
                  <div><Label $track={-0.4}>Product/Service Name</Label><Input><span>30 days weight lose diet ebook</span></Input></div>
                  <div><Label $track={-0.5}>Price Point</Label><Input><span>$20</span></Input></div>
                </Column>
                <Column>
                  <Area label="Target Audience" text="overweight individuals" track={-0.46} />
                  <Area label="Main Goal" text="to get sales for my ebook" track={-0.3} focus />
                </Column>
              </Form>
              <Preview>
                <PreviewTitle>AI-Generated Funnel Structure Preview</PreviewTitle>
                <Stages>
                  <Stage><StageName>Landing Page</StageName><StageRate>Est. Conv: 12-18%</StageRate></Stage>
                  <Stage><StageName>Optin Page</StageName><StageRate>Est. Conv: 35-50%</StageRate></Stage>
                  <Stage><StageName>Email Page</StageName><StageRate>Est. Conv: 8-15%</StageRate></Stage>
                  <Stage /><Stage />
                </Stages>
              </Preview>
            </Card>
          </Content>
        </Main>

        <ScrollRail>
          <Svg s={18}><path d="M7.500 1.500Q9 -0.500 10.500 1.500L17.500 12.500Q18 14 16 14H2Q0 14 0.500 12.500Z" fill="#8b8b8b" /></Svg>
          <Thumb />
          <Svg s={18}><path d="M7.500 15.500Q9 17.500 10.500 15.500L17.500 4.500Q18 3 16 3H2Q0 3 0.500 4.500Z" fill="#8b8b8b" /></Svg>
        </ScrollRail>
      </Page>

      <Floater>
        <svg width="40" height="40" viewBox="0 0 40 40" fill="#222">
          <path d="M14.500 6L18.500 15.500L28 20L18.500 24.500L14.500 34L10.500 24.500L1 20L10.500 15.500Z" />
          <path d="M31.500 1L33.500 5.500L38.500 7.700L33.500 10L31.500 14.500L29.500 10L24.500 7.700L29.500 5.500ZM31.500 25.500L33.500 30L38.500 32.300L33.500 34.500L31.500 39L29.500 34.500L24.500 32.300L29.500 30Z" />
        </svg>
      </Floater>

      <Taskbar>
        <Widgets />
        <Apps>
          {APPS.map(({ key, icon, state, badge }) => (
            <TaskApp key={key} $state={state}>{icon}{badge && <Badge $over>{badge}</Badge>}</TaskApp>
          ))}
        </Apps>
        <Tray>
          <Svg s={30} stroke="#fff" strokeWidth="2.200"><path d="M2 22L15 9L28 22" /></Svg>
          <TrayGroup $gap={31}>
            <Svg s={36}>
              <path d="M10 27A7 7 0 0 1 8 14C10 6 24 5 26 14V27Z" fill="#b4bac6" />
              <path d="M3 24L14 17L18 27H10Q5 27 3 24Z" fill="#f2f2f2" />
              <circle cx="25" cy="24" r="9.500" fill="#60cdff" stroke="#12264a" strokeWidth="1.500" /><path d="M25 22V29M25 17.500V20" stroke="#12264a" strokeWidth="2.600" />
            </Svg>
          </TrayGroup>
          <TrayGroup $gap={30}>
            <Svg s={34} stroke="#fff" strokeWidth="2.400">
              <path d="M1 13C10 3 24 3 33 13M6 18.500C12.500 11 21.500 11 28 18.500M11 23.500C14.500 19 19.500 19 23 23.500" /><circle cx="17" cy="28" r="1.800" fill="#fff" />
            </Svg>
          </TrayGroup>
          <TrayGroup $gap={14}>
            <Svg s={34} stroke="#fff" strokeWidth="2.200">
              <path d="M1 12.500H6L14 5.500V29L6 22H1ZM18 12.500C20.500 15.500 20.500 19 18 22M22.500 8.500C27.500 14 27.500 20.500 22.500 26M27.500 4.500C35 12 35 22.500 27.500 30" />
            </Svg>
          </TrayGroup>
          <Clock>3:37 AM<br />7/7/2025</Clock>
          <Badge>2</Badge>
        </Tray>
      </Taskbar>
    </Screen>
  );
}
